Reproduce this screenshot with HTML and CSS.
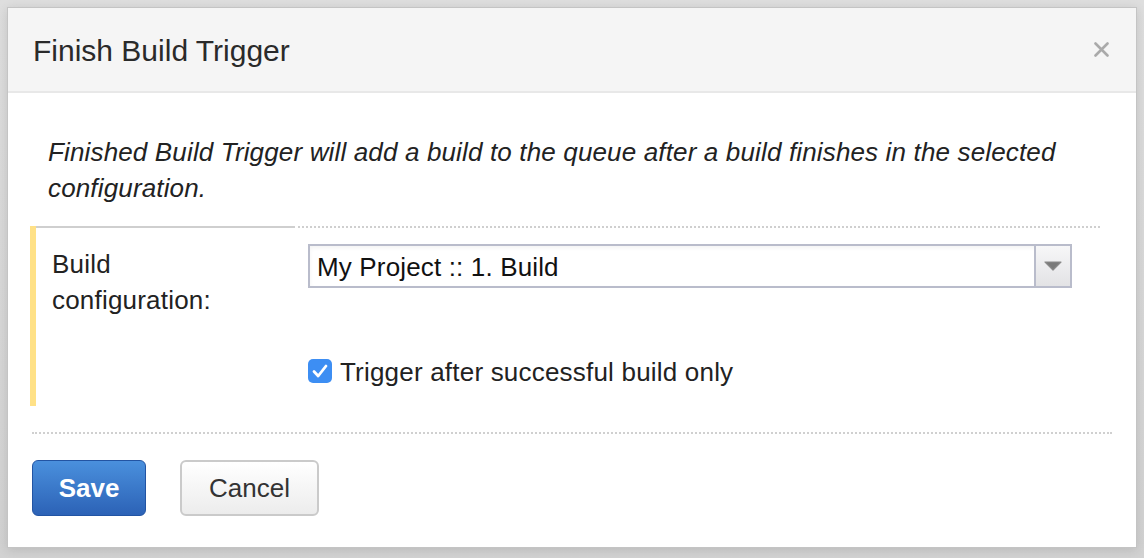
FILE: index.html
```html
<!DOCTYPE html>
<html>
<head>
<meta charset="utf-8">
<link rel="stylesheet" href="styles.css">
</head>
<body>
<div class="dialog">
  <div class="header">
    <h1 class="title">Finish Build Trigger</h1>
    <svg class="close" width="15" height="15" viewBox="0 0 15 15"><path d="M1.5 1.5L13.5 13.5M13.5 1.5L1.5 13.5" stroke="#aaa" stroke-width="2.6" stroke-linecap="round"/></svg>
  </div>
  <div class="content">
    <p class="desc">Finished Build Trigger will add a build to the queue after a build finishes in the selected configuration.</p>
    <div class="row">
      <div class="label-cell">Build<br>configuration:</div>
      <div class="field-cell">
        <div class="select">
          <span class="select-text">My Project :: 1. Build</span>
          <span class="select-btn"><svg width="18" height="10" viewBox="0 0 18 10"><path d="M1 1H17L9 9Z" fill="#7a7a7a" stroke="#8a8a8a" stroke-width="1.2" stroke-linejoin="round"/></svg></span>
        </div>
        <label class="check-row">
          <span class="checkbox"><svg width="24" height="24" viewBox="0 0 24 24"><path d="M6 12.5L10.2 17L18 7" fill="none" stroke="#fff" stroke-width="2.8" stroke-linecap="round" stroke-linejoin="round"/></svg></span>
          <span>Trigger after successful build only</span>
        </label>
      </div>
    </div>
    <div class="sep"></div>
    <div class="buttons">
      <button class="btn btn-primary">Save</button>
      <button class="btn btn-default">Cancel</button>
    </div>
  </div>
</div>
</body>
</html>
```

FILE: styles.css
```css
html, body {
  margin: 0;
  padding: 0;
}
body {
  width: 1144px;
  height: 558px;
  background: linear-gradient(#dedede, #d2d2d2);
  font-family: "Liberation Sans", Arial, sans-serif;
  color: #222;
  overflow: hidden;
}
.dialog {
  margin: 7px 0 0 7px;
  width: 1128px;
  height: 539px;
  border: 1px solid #c4c4c4;
  background: #fff;
  box-shadow: 0 2px 10px rgba(0,0,0,0.12);
}
.header {
  height: 83px;
  background: #f5f5f5;
  border-bottom: 2px solid #e8e8e8;
  display: flex;
  align-items: center;
  justify-content: space-between;
  padding: 0 27px 0 25px;
}
.title {
  margin: 2px 0 0 0;
  font-size: 30px;
  font-weight: normal;
  color: #2a2a2a;
}
.close {
  display: block;
  margin-top: -1px;
}
.content {
  padding-top: 41px;
}
.desc {
  margin: 0 0 0 40px;
  width: 1050px;
  font-style: italic;
  font-size: 26px;
  letter-spacing: 0.15px;
  line-height: 36px;
  color: #222;
}
.row {
  margin: 20px 0 0 22px;
  width: 1064px;
  border-left: 6px solid #ffe187;
  display: flex;
}
.label-cell {
  width: 241px;
  border-top: 2px solid #cfcfcf;
  padding: 18px 0 0 16px;
  font-size: 26px;
  letter-spacing: 0.2px;
  line-height: 36px;
}
.field-cell {
  flex: 1;
  border-top: 2px dotted #cfcfcf;
  padding: 16px 0 16px 15px;
}
.select {
  width: 760px;
  height: 40px;
  border: 2px solid #b9bccb;
  display: flex;
  align-items: stretch;
  box-shadow: inset 0 2px 4px rgba(0,0,0,0.05);
}
.select-text {
  flex: 1;
  font-size: 26px;
  letter-spacing: 0.15px;
  line-height: 42px;
  padding-left: 7px;
  color: #111;
}
.select-btn {
  width: 34px;
  border-left: 2px solid #b9bccb;
  background: linear-gradient(#f7f7f8, #e3e3e5);
  display: flex;
  align-items: center;
  justify-content: center;
}
.check-row {
  display: flex;
  align-items: center;
  gap: 8px;
  margin-top: 66px;
  font-size: 26px;
  letter-spacing: 0.2px;
  line-height: 36px;
}
.checkbox {
  width: 24px;
  height: 24px;
  border-radius: 5px;
  background: #3d8ef3;
  display: flex;
  align-items: center;
  justify-content: center;
  margin-top: -2px;
}
.sep {
  margin: 26px 0 0 24px;
  width: 1080px;
  border-top: 2px dotted #d0d0d0;
}
.buttons {
  display: flex;
  gap: 34px;
  margin: 26px 0 0 24px;
}
.btn {
  height: 56px;
  border-radius: 6px;
  font-family: "Liberation Sans", Arial, sans-serif;
  font-size: 26px;
  padding: 0;
}
.btn-primary {
  width: 114px;
  border: 1px solid #2254a3;
  background: linear-gradient(#4a90dd, #2c62b6);
  color: #fff;
  font-weight: bold;
}
.btn-default {
  width: 139px;
  border: 2px solid #cacaca;
  background: linear-gradient(#ffffff, #ececec);
  color: #333;
}
```
